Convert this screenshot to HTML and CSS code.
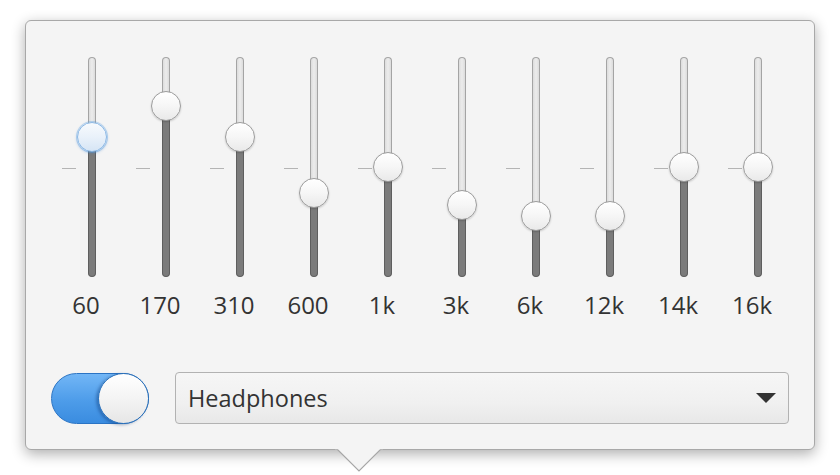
FILE: index.html
```html
<!DOCTYPE html>
<html>
<head>
<meta charset="utf-8">
<link rel="stylesheet" href="styles.css">
</head>
<body>
<div class="stage">
  <div class="popover">
    <div class="eq">
      <div class="band"><div class="slider"><div class="mark"></div><div class="track"><div class="upper" style="height:80px"></div><div class="lower"></div></div><div class="knob active" style="top:65px"></div></div><div class="label">60</div></div>
      <div class="band"><div class="slider"><div class="mark"></div><div class="track"><div class="upper" style="height:49px"></div><div class="lower"></div></div><div class="knob" style="top:34px"></div></div><div class="label">170</div></div>
      <div class="band"><div class="slider"><div class="mark"></div><div class="track"><div class="upper" style="height:80px"></div><div class="lower"></div></div><div class="knob" style="top:65px"></div></div><div class="label">310</div></div>
      <div class="band"><div class="slider"><div class="mark"></div><div class="track"><div class="upper" style="height:136px"></div><div class="lower"></div></div><div class="knob" style="top:121px"></div></div><div class="label">600</div></div>
      <div class="band"><div class="slider"><div class="mark"></div><div class="track"><div class="upper" style="height:110px"></div><div class="lower"></div></div><div class="knob" style="top:95px"></div></div><div class="label">1k</div></div>
      <div class="band"><div class="slider"><div class="mark"></div><div class="track"><div class="upper" style="height:148px"></div><div class="lower"></div></div><div class="knob" style="top:133px"></div></div><div class="label">3k</div></div>
      <div class="band"><div class="slider"><div class="mark"></div><div class="track"><div class="upper" style="height:159px"></div><div class="lower"></div></div><div class="knob" style="top:144px"></div></div><div class="label">6k</div></div>
      <div class="band"><div class="slider"><div class="mark"></div><div class="track"><div class="upper" style="height:159px"></div><div class="lower"></div></div><div class="knob" style="top:144px"></div></div><div class="label">12k</div></div>
      <div class="band"><div class="slider"><div class="mark"></div><div class="track"><div class="upper" style="height:110px"></div><div class="lower"></div></div><div class="knob" style="top:95px"></div></div><div class="label">14k</div></div>
      <div class="band"><div class="slider"><div class="mark"></div><div class="track"><div class="upper" style="height:110px"></div><div class="lower"></div></div><div class="knob" style="top:95px"></div></div><div class="label">16k</div></div>
    </div>
    <div class="controls">
      <div class="switch"><div class="switch-knob"></div></div>
      <div class="combo">
        <span class="combo-text">Headphones</span>
        <svg class="combo-arrow" width="20" height="10" viewBox="0 0 20 10"><polygon points="0,0 20,0 10,10" fill="#333"/></svg>
      </div>
    </div>
    <svg class="pointer" width="48" height="25" viewBox="0 0 48 25"><polygon points="1,0 24,23 47,0" fill="#f4f4f4" stroke="#a6a6a6" stroke-width="1.2"/><rect x="0" y="0" width="48" height="1.2" fill="#f4f4f4"/></svg>
  </div>
</div>
</body>
</html>
```

FILE: styles.css
```css
html, body {
  margin: 0;
  padding: 0;
  background: #ffffff;
}
body {
  min-height: 475px;
}
.stage {
  height: 475px;
  box-sizing: border-box;
  padding: 20px 0 0 25px;
  font-family: "Open Sans", "Noto Sans", sans-serif;
  color: #333;
}
.popover {
  position: relative;
  box-sizing: border-box;
  width: 790px;
  height: 430px;
  background: #f4f4f4;
  border: 1px solid #a8a8a8;
  border-radius: 6px;
  box-shadow: 0 4px 14px rgba(0, 0, 0, 0.32);
  padding: 36px 25px 25px 25px;
  display: flex;
  flex-direction: column;
}
.eq {
  display: flex;
  gap: 26px;
  margin-left: 11px;
}
.band {
  width: 48px;
  display: flex;
  flex-direction: column;
  align-items: center;
}
.slider {
  position: relative;
  width: 48px;
  height: 220px;
  display: flex;
}
.mark {
  width: 14px;
  height: 1px;
  margin-top: 111px;
  background: #b4b4b4;
}
.track {
  margin-left: 12px;
  width: 8px;
  height: 220px;
  display: flex;
  flex-direction: column;
}
.upper {
  box-sizing: border-box;
  background: linear-gradient(to right, #dcdcdc, #ececec 50%, #dcdcdc);
  border: 1px solid #a4a4a4;
  border-bottom: none;
  border-radius: 4px 4px 0 0;
}
.lower {
  flex: 1;
  box-sizing: border-box;
  background: #7b7b7b;
  border: 1px solid #5e5e5e;
  border-top: none;
  border-radius: 0 0 4px 4px;
}
.knob {
  position: absolute;
  left: 15px;
  width: 30px;
  height: 30px;
  box-sizing: border-box;
  border-radius: 50%;
  border: 1px solid #9c9c9c;
  background: linear-gradient(#ffffff, #f6f6f6 50%, #e9e9e9);
  box-shadow: 0 1px 2px rgba(0, 0, 0, 0.18);
}
.knob.active {
  border-color: #8ab8e6;
  background: linear-gradient(#f7fafd, #e9f1fa 50%, #d6e5f5);
  box-shadow: 0 0 0 1px rgba(90, 160, 230, 0.35), 0 1px 3px rgba(60, 130, 210, 0.45);
}
.label {
  margin-top: 13px;
  font-size: 24px;
  line-height: 30px;
  color: #333;
  white-space: nowrap;
}
.controls {
  margin-top: auto;
  display: flex;
  align-items: center;
  gap: 26px;
}
.switch {
  box-sizing: border-box;
  width: 98px;
  height: 51px;
  border-radius: 26px;
  border: 1px solid #2b74c4;
  background: linear-gradient(#72b6f6, #4d9ce9 55%, #3a8ce0);
  display: flex;
  justify-content: flex-end;
  align-items: center;
}
.switch-knob {
  box-sizing: border-box;
  width: 51px;
  height: 51px;
  margin-right: -1px;
  border-radius: 50%;
  border: 1px solid #2a6fb8;
  background: linear-gradient(#ffffff, #f4f4f4 50%, #e6e6e6);
  box-shadow: -2px 1px 3px rgba(0, 40, 100, 0.35);
}
.combo {
  flex: 1;
  box-sizing: border-box;
  height: 52px;
  border: 1px solid #b2b2b2;
  border-radius: 4px;
  background: linear-gradient(#f6f6f6, #f0f0f0 60%, #e8e8e8);
  display: flex;
  align-items: center;
  justify-content: space-between;
  padding: 0 12px 0 12px;
}
.combo-text {
  font-size: 23.5px;
  color: #333;
}
.combo-arrow {
  display: block;
}
.pointer {
  position: absolute;
  left: 309px;
  bottom: -24px;
}
```
